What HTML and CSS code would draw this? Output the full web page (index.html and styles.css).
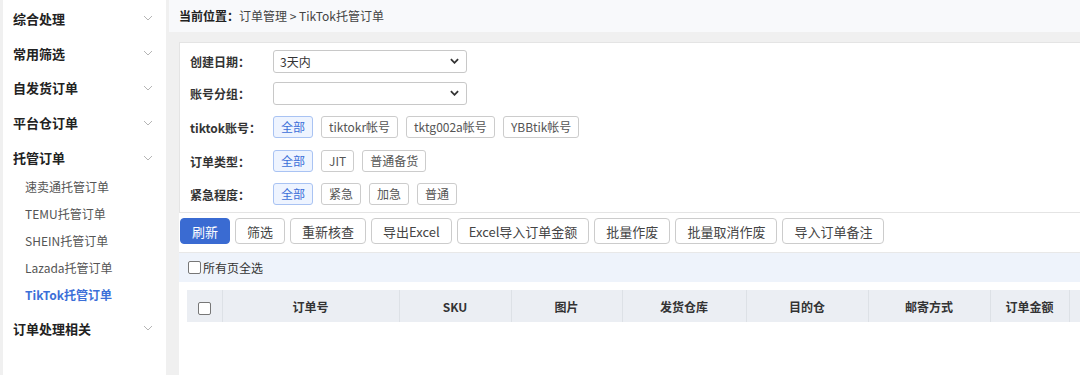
FILE: index.html
```html
<!DOCTYPE html>
<html lang="zh-CN">
<head>
    <meta charset="UTF-8">
    <meta name="viewport" content="width=device-width, initial-scale=1.0">
    <title>TikTok托管订单</title>
    <link rel="stylesheet" href="styles.css">
</head>
<body>
    <div class="layout">
        <aside class="sidebar">
            <div class="nav-group"><span>综合处理</span><svg class="chev" viewBox="0 0 10 6"><path d="M1 1l4 4 4-4"/></svg></div>
            <div class="nav-group"><span>常用筛选</span><svg class="chev" viewBox="0 0 10 6"><path d="M1 1l4 4 4-4"/></svg></div>
            <div class="nav-group"><span>自发货订单</span><svg class="chev" viewBox="0 0 10 6"><path d="M1 1l4 4 4-4"/></svg></div>
            <div class="nav-group"><span>平台仓订单</span><svg class="chev" viewBox="0 0 10 6"><path d="M1 1l4 4 4-4"/></svg></div>
            <div class="nav-group"><span>托管订单</span><svg class="chev" viewBox="0 0 10 6"><path d="M1 1l4 4 4-4"/></svg></div>
            <ul class="sub-nav">
                <li>速卖通托管订单</li>
                <li>TEMU托管订单</li>
                <li>SHEIN托管订单</li>
                <li>Lazada托管订单</li>
                <li class="active">TikTok托管订单</li>
            </ul>
            <div class="nav-group last"><span>订单处理相关</span><svg class="chev" viewBox="0 0 10 6"><path d="M1 1l4 4 4-4"/></svg></div>
        </aside>

        <main class="main">
            <div class="crumb"><span class="crumb-title">当前位置：</span>订单管理 &gt; TikTok托管订单</div>

            <div class="content">
                <div class="filter-panel">
                    <div class="filter-row">
                        <label>创建日期：</label>
                        <div class="select"><span>3天内</span><svg viewBox="0 0 10 6"><path d="M1 1l4 4 4-4"/></svg></div>
                    </div>
                    <div class="filter-row">
                        <label>账号分组：</label>
                        <div class="select"><span></span><svg viewBox="0 0 10 6"><path d="M1 1l4 4 4-4"/></svg></div>
                    </div>
                    <div class="filter-row tag-row">
                        <label>tiktok账号：</label>
                        <div class="tags">
                            <span class="tag active">全部</span>
                            <span class="tag">tiktokr帐号</span>
                            <span class="tag">tktg002a帐号</span>
                            <span class="tag">YBBtik帐号</span>
                        </div>
                    </div>
                    <div class="filter-row tag-row">
                        <label>订单类型：</label>
                        <div class="tags">
                            <span class="tag active">全部</span>
                            <span class="tag">JIT</span>
                            <span class="tag">普通备货</span>
                        </div>
                    </div>
                    <div class="filter-row tag-row">
                        <label>紧急程度：</label>
                        <div class="tags">
                            <span class="tag active">全部</span>
                            <span class="tag">紧急</span>
                            <span class="tag">加急</span>
                            <span class="tag">普通</span>
                        </div>
                    </div>
                </div>

                <div class="toolbar">
                    <button class="btn primary">刷新</button>
                    <button class="btn">筛选</button>
                    <button class="btn">重新核查</button>
                    <button class="btn">导出Excel</button>
                    <button class="btn">Excel导入订单金额</button>
                    <button class="btn">批量作废</button>
                    <button class="btn">批量取消作废</button>
                    <button class="btn">导入订单备注</button>
                </div>

                <div class="select-all">
                    <span class="check"></span>所有页全选
                </div>

                <table class="grid">
                    <colgroup>
                        <col style="width:35px">
                        <col style="width:177px">
                        <col style="width:112px">
                        <col style="width:111px">
                        <col style="width:124px">
                        <col style="width:122px">
                        <col style="width:122px">
                        <col style="width:79px">
                        <col style="width:100px">
                    </colgroup>
                    <thead>
                        <tr>
                            <th><span class="check"></span></th>
                            <th>订单号</th>
                            <th>SKU</th>
                            <th>图片</th>
                            <th>发货仓库</th>
                            <th>目的仓</th>
                            <th>邮寄方式</th>
                            <th>订单金额</th>
                            <th></th>
                        </tr>
                    </thead>
                </table>
            </div>
        </main>
    </div>
</body>
</html>
```

FILE: styles.css
```css
body {
    margin: 0;
    padding: 0;
    font-family: "Noto Sans CJK SC", "Noto Sans", sans-serif;
    font-size: 12px;
    color: #333;
    background-color: #f0f0f0;
}

.layout {
    display: flex;
    height: 375px;
    overflow: hidden;
}

/* 左侧菜单 */
.sidebar {
    width: 163px;
    margin-left: 3px;
    background: #fff;
    flex-shrink: 0;
    padding-top: 1px;
}

.nav-group {
    height: 34.8px;
    display: flex;
    align-items: center;
    justify-content: space-between;
    padding: 0 13px 0 10px;
    font-size: 13px;
    font-weight: bold;
    color: #222;
}

.nav-group.last {
    margin-top: 3px;
}

.chev {
    width: 10px;
    height: 6px;
    fill: none;
    stroke: #b5b5b5;
    stroke-width: 1;
}

.sub-nav {
    list-style: none;
    margin: -2px 0 0;
    padding: 0;
}

.sub-nav li {
    height: 27px;
    line-height: 27px;
    padding-left: 22px;
    color: #555;
    font-size: 12px;
}

.sub-nav li.active {
    color: #3c6fd8;
    font-weight: bold;
}

/* 主区域 */
.main {
    flex: 1;
    margin-left: 3px;
    display: flex;
    flex-direction: column;
    overflow: hidden;
    min-width: 0;
}

.crumb {
    height: 32px;
    line-height: 32px;
    padding-left: 10px;
    background: #f8f9fb;
    color: #444;
    white-space: nowrap;
}

.crumb-title {
    color: #222;
    font-weight: bold;
}

.content {
    flex: 1;
    margin: 10px 0 0 10px;
    background: #fff;
}

.filter-panel {
    border: 1px solid #e4e4e4;
    border-right: none;
    padding: 7px 10px 7px;
    display: flex;
    flex-direction: column;
    gap: 10px;
}

.filter-row {
    display: flex;
    align-items: center;
    height: 22px;
}

.filter-row.tag-row {
    margin-top: 2px;
}

.filter-row.tag-row:last-child {
    margin-top: 1px;
}

.filter-row label {
    width: 83px;
    flex-shrink: 0;
    font-weight: bold;
    color: #333;
    white-space: nowrap;
}

.select {
    width: 194px;
    height: 23px;
    border: 1px solid #c8c8c8;
    border-radius: 3px;
    box-sizing: border-box;
    display: flex;
    align-items: center;
    justify-content: space-between;
    padding: 0 7px 0 6px;
    color: #333;
}

.select svg {
    width: 9px;
    height: 6px;
    fill: none;
    stroke: #333;
    stroke-width: 2;
}

.tags {
    display: flex;
    gap: 8px;
}

.tag {
    height: 22px;
    line-height: 20px;
    padding: 0 7px;
    border: 1px solid #ccc;
    border-radius: 3px;
    box-sizing: border-box;
    color: #555;
    white-space: nowrap;
    background: #fff;
}

.tag.active {
    background: #eef4ff;
    border-color: #a9c3f3;
    color: #3c6fd8;
}

.toolbar {
    display: flex;
    gap: 5px;
    padding: 5px 0 8px 1px;
    border-bottom: 1px solid #e8e8e8;
}

.btn {
    height: 26px;
    padding: 0 11px;
    border: 1px solid #ccc;
    border-radius: 4px;
    background: #fff;
    color: #444;
    font-family: inherit;
    font-size: 13px;
    white-space: nowrap;
    cursor: pointer;
}

.btn.primary {
    background: #3a6bd2;
    border-color: #3a6bd2;
    color: #fff;
}

.select-all {
    height: 29px;
    background: #eef3fb;
    display: flex;
    align-items: center;
    padding-left: 9px;
    color: #333;
}

.check {
    display: inline-block;
    width: 11px;
    height: 11px;
    border: 1px solid #777;
    border-radius: 2px;
    background: #fff;
    margin-right: 2px;
    vertical-align: middle;
}

.grid {
    margin: 8px 0 0 8px;
    border-collapse: collapse;
    table-layout: fixed;
    width: 982px;
}

.grid th {
    height: 32px;
    background: #ebeef3;
    border-left: 1px solid #dde1e6;
    font-weight: bold;
    color: #333;
    font-size: 12px;
    text-align: center;
    padding: 0;
}

.grid th:first-child {
    border-left: none;
}

.grid th .check {
    margin: 0;
}
```
